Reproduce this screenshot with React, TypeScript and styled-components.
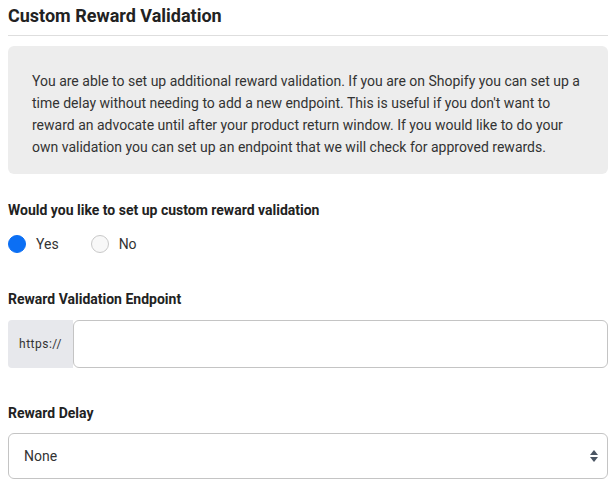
import React, { useState } from 'react';
import styled, { createGlobalStyle } from 'styled-components';

const GlobalStyle = createGlobalStyle`
  body {
    margin: 0;
    background: #ffffff;
    font-family: Roboto, "Liberation Sans", sans-serif;
    color: #222;
  }
`;

const Page = styled.div`
  padding: 0 6px 0 8px;
`;

const Title = styled.h2`
  margin: 0;
  padding-top: 5px;
  font-size: 18px;
  font-weight: 700;
  line-height: 22px;
  color: #222;
  padding-bottom: 8px;
  border-bottom: 1px solid #dedede;
`;

const InfoBox = styled.div`
  margin-top: 10px;
  background-color: #ededed;
  border-radius: 6px;
  padding: 24px 24px 16px;
  font-size: 14px;
  line-height: 22px;
  color: #333;
`;

const Section = styled.div<{ $top: number }>`
  margin-top: ${(p) => p.$top}px;
`;

const Label = styled.div`
  font-size: 14px;
  font-weight: 700;
  line-height: 18px;
  color: #222;
`;

const RadioRow = styled.div`
  display: flex;
  align-items: center;
  gap: 32px;
  margin-top: 16px;
`;

const RadioOption = styled.label`
  display: flex;
  align-items: center;
  gap: 10px;
  font-size: 14px;
  color: #333;
  cursor: pointer;
`;

const RadioDot = styled.span<{ $checked: boolean }>`
  width: 18px;
  height: 18px;
  border-radius: 50%;
  box-sizing: border-box;
  background: ${(p) => (p.$checked ? '#0b6ff4' : '#f8f8f8')};
  border: 1px solid ${(p) => (p.$checked ? '#0b6ff4' : '#c9c9c9')};
`;

const InputGroup = styled.div`
  display: flex;
  margin-top: 12px;
  height: 48px;
`;

const Prefix = styled.span`
  display: flex;
  align-items: center;
  justify-content: center;
  width: 65px;
  background: #e7e8ec;
  border-radius: 4px 0 0 4px;
  font-size: 12px;
  letter-spacing: 0.5px;
  color: #333;
`;

const TextInput = styled.input`
  flex: 1;
  border: 1px solid #c4c4c4;
  border-radius: 6px;
  padding: 0 12px;
  font-size: 14px;
  font-family: inherit;
  outline: none;
`;

const SelectBox = styled.div`
  position: relative;
  margin-top: 11px;
  height: 46px;
  border: 1px solid #c4c4c4;
  border-radius: 6px;
  box-sizing: border-box;
  display: flex;
  align-items: center;
  padding: 0 15px;
  font-size: 14px;
  color: #333;
`;

const Arrows = styled.svg`
  position: absolute;
  right: 8px;
  top: 50%;
  transform: translateY(-50%);
`;

export default function App() {
  const [custom, setCustom] = useState(true);

  return (
    <>
      <GlobalStyle />
      <Page>
        <Title>Custom Reward Validation</Title>
        <InfoBox>
          You are able to set up additional reward validation. If you are on Shopify you can set up a
          time delay without needing to add a new endpoint. This is useful if you don't want to
          reward an advocate until after your product return window. If you would like to do your
          own validation you can set up an endpoint that we will check for approved rewards.
        </InfoBox>

        <Section $top={27}>
          <Label>Would you like to set up custom reward validation</Label>
          <RadioRow>
            <RadioOption onClick={() => setCustom(true)}>
              <RadioDot $checked={custom} />
              Yes
            </RadioOption>
            <RadioOption onClick={() => setCustom(false)}>
              <RadioDot $checked={!custom} />
              No
            </RadioOption>
          </RadioRow>
        </Section>

        <Section $top={37}>
          <Label>Reward Validation Endpoint</Label>
          <InputGroup>
            <Prefix>https://</Prefix>
            <TextInput type="text" />
          </InputGroup>
        </Section>

        <Section $top={36}>
          <Label>Reward Delay</Label>
          <SelectBox>
            None
            <Arrows width="10" height="14" viewBox="0 0 10 14">
              <path d="M5 1 L9 6 H1 Z" fill="#4a5563" />
              <path d="M5 13 L9 8 H1 Z" fill="#4a5563" />
            </Arrows>
          </SelectBox>
        </Section>
      </Page>
    </>
  );
}
